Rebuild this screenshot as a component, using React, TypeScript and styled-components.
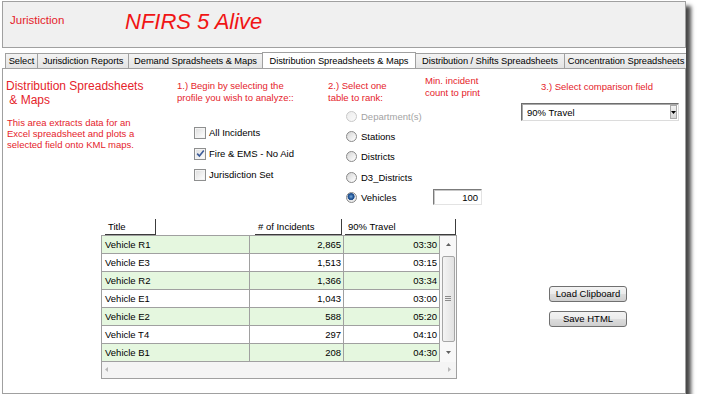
import React from "react";
import styled, { createGlobalStyle } from "styled-components";

const RED = "#e5232b";
const LINE = "#a0a0a0";

const tabs = [
  { label: "Select", width: 33 },
  { label: "Jurisdiction Reports", width: 92 },
  { label: "Demand Spradsheets & Maps", width: 135 },
  { label: "Distribution Spreadsheets & Maps", width: 154, active: true },
  { label: "Distribution / Shifts Spreadsheets", width: 150 },
  { label: "Concentration Spreadsheets", width: 124 },
];

const profiles = [
  { label: "All Incidents", checked: false },
  { label: "Fire & EMS - No Aid", checked: true },
  { label: "Jurisdiction Set", checked: false },
];

const rankTables = [
  { label: "Department(s)", disabled: true },
  { label: "Stations" },
  { label: "Districts" },
  { label: "D3_Districts" },
  { label: "Vehicles", selected: true },
];

const rows = [
  { title: "Vehicle R1", count: "2,865", travel: "03:30" },
  { title: "Vehicle E3", count: "1,513", travel: "03:15" },
  { title: "Vehicle R2", count: "1,366", travel: "03:34" },
  { title: "Vehicle E1", count: "1,043", travel: "03:00" },
  { title: "Vehicle E2", count: "588", travel: "05:20" },
  { title: "Vehicle T4", count: "297", travel: "04:10" },
  { title: "Vehicle B1", count: "208", travel: "04:30" },
];

function App() {
  return (
    <>
      <GlobalStyle />
      <Window>
        <TitleBar>
          <AppLabel>Juristiction</AppLabel>
          <AppTitle>NFIRS 5 Alive</AppTitle>
        </TitleBar>

        <TabStrip>
          {tabs.map((tab) => (
            <Tab key={tab.label} $width={tab.width} $active={!!tab.active}>
              {tab.label}
            </Tab>
          ))}
        </TabStrip>

        <TabPage>
          <TopArea>
            <Intro>
              <Heading>
                Distribution Spreadsheets
                <br />
                &nbsp;&amp; Maps
              </Heading>
              <Description>
                This area extracts data for an
                <br />
                Excel spreadsheet and plots a
                <br />
                selected field onto KML maps.
              </Description>
            </Intro>

            <ProfileCol>
              <Step>
                1.) Begin by selecting the
                <br />
                profile you wish to analyze::
              </Step>
              <CheckList>
                {profiles.map((p) => (
                  <CheckRow key={p.label}>
                    <CheckBox>
                      {p.checked && (
                        <svg width="9" height="9" viewBox="0 0 9 9">
                          <path d="M1.2 4.6 L3.4 7 L7.8 1.4" fill="none" stroke="#3d5c99" strokeWidth="1.6" />
                        </svg>
                      )}
                    </CheckBox>
                    <OptionLabel>{p.label}</OptionLabel>
                  </CheckRow>
                ))}
              </CheckList>
            </ProfileCol>

            <RankCol>
              <RankHead>
                <Step $width={97}>
                  2.) Select one
                  <br />
                  table to rank:
                </Step>
                <MinNote>
                  Min. incident
                  <br />
                  count to print
                </MinNote>
              </RankHead>
              <RadioList>
                {rankTables.map((r) => (
                  <RadioRow key={r.label}>
                    <Radio $selected={!!r.selected} $disabled={!!r.disabled} />
                    <OptionLabel $disabled={!!r.disabled}>{r.label}</OptionLabel>
                    {r.selected && <CountBox>100</CountBox>}
                  </RadioRow>
                ))}
              </RadioList>
            </RankCol>

            <FieldCol>
              <FieldLabel>3.) Select comparison field</FieldLabel>
              <Dropdown>
                <span>90% Travel</span>
                <DropArrow>
                  <svg width="5" height="3" viewBox="0 0 5 3">
                    <path d="M0 0 H5 L2.5 3 Z" fill="#000" />
                  </svg>
                </DropArrow>
              </Dropdown>
            </FieldCol>
          </TopArea>

          <BottomArea>
            <TableBox>
              <HeaderRow>
                <HeaderCell $offset={4} $width={51}>Title</HeaderCell>
                <HeaderCell $offset={99} $width={87}># of Incidents</HeaderCell>
                <HeaderCell $offset={3} $width={111}>90% Travel</HeaderCell>
              </HeaderRow>
              <GridFrame>
                <Rows>
                  {rows.map((row, i) => (
                    <Row key={row.title} $alt={i % 2 === 0}>
                      <Cell>{row.title}</Cell>
                      <Cell $right>{row.count}</Cell>
                      <Cell $right>{row.travel}</Cell>
                    </Row>
                  ))}
                </Rows>
                <VScroll>
                  <ScrollArrow>
                    <svg width="5" height="3" viewBox="0 0 5 3">
                      <path d="M0 3 L2.5 0 L5 3 Z" fill="#606060" />
                    </svg>
                  </ScrollArrow>
                  <Thumb>
                    <svg width="6" height="5" viewBox="0 0 6 5">
                      <path d="M0 0.5 H6 M0 2.5 H6 M0 4.5 H6" stroke="#8a8a8a" strokeWidth="1" />
                    </svg>
                  </Thumb>
                  <ScrollArrow>
                    <svg width="5" height="3" viewBox="0 0 5 3">
                      <path d="M0 0 H5 L2.5 3 Z" fill="#606060" />
                    </svg>
                  </ScrollArrow>
                </VScroll>
                <HScroll>
                  <svg width="3" height="5" viewBox="0 0 3 5">
                    <path d="M3 0 V5 L0 2.5 Z" fill="#b8b8b8" />
                  </svg>
                  <svg width="3" height="5" viewBox="0 0 3 5">
                    <path d="M0 0 V5 L3 2.5 Z" fill="#b8b8b8" />
                  </svg>
                </HScroll>
              </GridFrame>
            </TableBox>

            <ButtonCol>
              <PushButton>Load Clipboard</PushButton>
              <PushButton>Save HTML</PushButton>
            </ButtonCol>
          </BottomArea>
        </TabPage>
      </Window>
    </>
  );
}

const GlobalStyle = createGlobalStyle`
  html, body {
    margin: 0;
    padding: 0;
    background: #fff;
  }
  body {
    font-family: "Liberation Sans", Arial, sans-serif;
    font-size: 9.5px;
    color: #000;
  }
  * {
    box-sizing: border-box;
  }
`;

const Window = styled.div`
  margin: 1px 0 0 2px;
  width: 684px;
  height: 393px;
  display: flex;
  flex-direction: column;
  background: #fff;
  box-shadow: 5px 5px 4px rgba(0, 0, 0, 0.72);
`;

const TitleBar = styled.header`
  flex: none;
  height: 47px;
  display: flex;
  align-items: flex-start;
  padding: 11px 0 0 7px;
  background: #f0f0f0;
  border: 1px solid ${LINE};
`;

const AppLabel = styled.span`
  width: 115px;
  font-size: 11.5px;
  line-height: 14px;
  color: ${RED};
`;

const AppTitle = styled.h1`
  margin: -4px 0 0;
  font-size: 22px;
  font-style: italic;
  font-weight: normal;
  line-height: 25px;
  color: #f01515;
`;

const TabStrip = styled.nav`
  flex: none;
  height: 16px;
  margin-top: 4px;
  padding-left: 3px;
  display: flex;
  align-items: flex-end;
  overflow: hidden;
  white-space: nowrap;
`;

const Tab = styled.div<{ $width: number; $active: boolean }>`
  position: relative;
  flex: none;
  width: ${({ $width }) => $width}px;
  height: ${({ $active }) => ($active ? 17 : 15)}px;
  margin-bottom: ${({ $active }) => ($active ? -1 : 0)}px;
  z-index: ${({ $active }) => ($active ? 1 : 0)};
  & + & {
    margin-left: -1px;
  }
  display: flex;
  align-items: center;
  justify-content: center;
  overflow: hidden;
  border: 1px solid ${LINE};
  border-bottom: none;
  background: ${({ $active }) => ($active ? "#fff" : "linear-gradient(#f3f3f3, #e4e4e4)")};
  font-size: 9.3px;
  letter-spacing: -0.05px;
  color: #000;
`;

const TabPage = styled.main`
  flex: 1;
  display: flex;
  flex-direction: column;
  border: 1px solid ${LINE};
`;

const TopArea = styled.section`
  display: flex;
  align-items: flex-start;
  padding: 6px 0 0 3px;
`;

const Intro = styled.div`
  width: 171px;
  flex: none;
`;

const Heading = styled.h2`
  margin: 4px 0 0;
  font-size: 12px;
  font-weight: normal;
  line-height: 14px;
  color: ${RED};
`;

const Description = styled.p`
  margin: 10px 0 0 1px;
  font-size: 9.5px;
  line-height: 11px;
  color: ${RED};
`;

const ProfileCol = styled.div`
  width: 151px;
  flex: none;
`;

const Step = styled.p<{ $width?: number }>`
  margin: 5px 0 0;
  width: ${({ $width }) => ($width ? `${$width}px` : "auto")};
  flex: none;
  font-size: 9.5px;
  line-height: 12px;
  color: ${RED};
`;

const CheckList = styled.div`
  margin: 18px 0 0 17px;
  display: flex;
  flex-direction: column;
`;

const CheckRow = styled.label`
  height: 21px;
  display: flex;
  align-items: center;
`;

const CheckBox = styled.span`
  width: 12px;
  height: 12px;
  flex: none;
  display: flex;
  align-items: center;
  justify-content: center;
  border: 1px solid #8e8f8f;
  background: linear-gradient(135deg, #dcdcdc, #f6f6f6 70%, #fff);
  box-shadow: inset 0 0 0 1px #f4f4f4;
`;

const OptionLabel = styled.span<{ $disabled?: boolean }>`
  margin-left: 3px;
  font-size: 9.5px;
  color: ${({ $disabled }) => ($disabled ? "#a3a3a3" : "#000")};
`;

const RankCol = styled.div`
  width: 193px;
  flex: none;
`;

const RankHead = styled.div`
  display: flex;
  align-items: flex-start;
`;

const MinNote = styled.p`
  margin: 0;
  font-size: 9.5px;
  line-height: 12px;
  color: ${RED};
`;

const RadioList = styled.div`
  margin: 2px 0 0 18px;
  display: flex;
  flex-direction: column;
`;

const RadioRow = styled.label`
  height: 20.3px;
  display: flex;
  align-items: center;
`;

const Radio = styled.span<{ $selected: boolean; $disabled: boolean }>`
  width: 11px;
  height: 11px;
  flex: none;
  margin-right: 1px;
  border-radius: 50%;
  border: 1px solid ${({ $disabled }) => ($disabled ? "#c8c8c8" : "#8a8a8a")};
  background: ${({ $selected, $disabled }) =>
    $selected
      ? "radial-gradient(circle at 45% 40%, #6fa8dc 0, #1f4f8f 2.5px, #2a5a98 3.3px, #e6e6e6 3.8px, #f4f4f4)"
      : $disabled
        ? "linear-gradient(135deg, #ececec, #fafafa)"
        : "linear-gradient(135deg, #d4d4d4, #f4f4f4 70%, #fff)"};
`;

const CountBox = styled.span`
  margin: 0 39px 0 auto;
  width: 49px;
  height: 16px;
  padding-right: 3px;
  display: flex;
  align-items: center;
  justify-content: flex-end;
  border: 1px solid;
  border-color: #7b7b7b #e3e3e3 #e3e3e3 #7b7b7b;
  box-shadow: inset 1px 1px 0 #c8c8c8;
  font-size: 9.5px;
`;

const FieldCol = styled.div`
  width: 158px;
  flex: none;
`;

const FieldLabel = styled.p`
  margin: 6px 0 0 20px;
  font-size: 9.5px;
  line-height: 12px;
  color: ${RED};
`;

const Dropdown = styled.div`
  margin-top: 10px;
  height: 18px;
  display: flex;
  align-items: center;
  justify-content: space-between;
  padding: 0 1px 0 5px;
  border: 1px solid;
  border-color: #6e6e6e #dcdcdc #dcdcdc #6e6e6e;
  box-shadow: inset 1px 1px 0 #a8a8a8;
  font-size: 9.5px;
`;

const DropArrow = styled.span`
  width: 7px;
  height: 14px;
  display: flex;
  align-items: flex-end;
  justify-content: center;
  padding-bottom: 4px;
  border: 1px solid #a9a9a9;
  background: linear-gradient(#f2f2f2, #d6d6d6);
`;

const BottomArea = styled.section`
  display: flex;
  align-items: flex-start;
  margin-top: 11.5px;
  padding-left: 98px;
`;

const TableBox = styled.div`
  width: 356px;
  flex: none;
  display: flex;
  flex-direction: column;
`;

const HeaderRow = styled.div`
  height: 16px;
  display: flex;
`;

const HeaderCell = styled.div<{ $offset: number; $width: number }>`
  margin-left: ${({ $offset }) => $offset}px;
  width: ${({ $width }) => $width}px;
  height: 16px;
  padding: 1px 0 0 3px;
  border-right: 1px solid #3c3c3c;
  border-bottom: 1px solid #3c3c3c;
  font-size: 9.5px;
  line-height: 13px;
`;

const GridFrame = styled.div`
  display: grid;
  grid-template-columns: 338px 16px;
  grid-template-rows: 126px 16px;
  border: 1px solid ${LINE};
`;

const Rows = styled.div`
  display: flex;
  flex-direction: column;
`;

const Row = styled.div<{ $alt: boolean }>`
  height: 18px;
  display: grid;
  grid-template-columns: 148px 94px 96px;
  background: ${({ $alt }) => ($alt ? "#e5f7df" : "#fff")};
`;

const Cell = styled.div<{ $right?: boolean }>`
  padding: 0 ${({ $right }) => ($right ? "2px" : "3px")};
  border-right: 1px solid ${LINE};
  border-bottom: 1px solid ${LINE};
  text-align: ${({ $right }) => ($right ? "right" : "left")};
  font-size: 9.5px;
  line-height: 17px;
  white-space: nowrap;
`;

const VScroll = styled.div`
  display: flex;
  flex-direction: column;
  align-items: center;
  background: #f8f8f8;
`;

const ScrollArrow = styled.span`
  height: 18px;
  display: flex;
  align-items: center;
  justify-content: center;
`;

const Thumb = styled.span`
  flex: 1;
  width: 13px;
  margin: 2px 0;
  display: flex;
  align-items: center;
  justify-content: center;
  border: 1px solid #a6a6a6;
  border-radius: 2px;
  background: linear-gradient(90deg, #f4f4f4, #e2e2e2);
`;

const HScroll = styled.div`
  grid-column: 1 / span 2;
  display: flex;
  align-items: center;
  justify-content: space-between;
  padding: 0 5px 0 3px;
  background: #f4f4f4;
`;

const ButtonCol = styled.div`
  margin: 67px 0 0 92px;
  display: flex;
  flex-direction: column;
  gap: 9px;
`;

const PushButton = styled.button`
  width: 78px;
  height: 16px;
  padding: 0;
  border: 1px solid #707070;
  border-radius: 3px;
  background: linear-gradient(#f3f3f3, #ebebeb 50%, #dddddd 50%, #cfcfcf);
  font-family: "Liberation Sans", Arial, sans-serif;
  font-size: 9.5px;
  line-height: 14px;
  color: #000;
`;

export default App;
